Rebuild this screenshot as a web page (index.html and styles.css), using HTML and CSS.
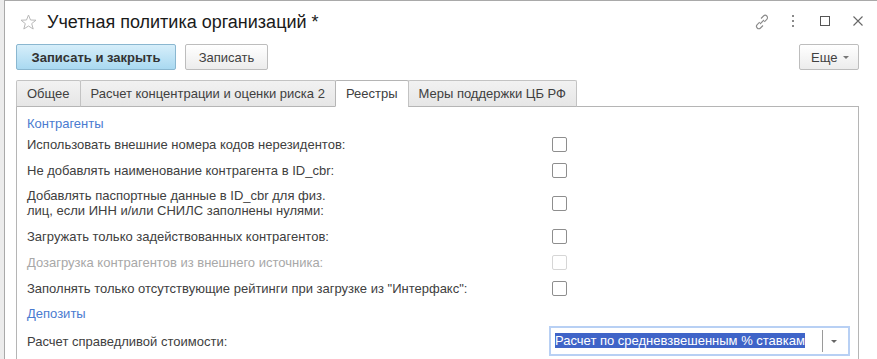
FILE: index.html
```html
<!DOCTYPE html>
<html lang="ru">
<head>
<meta charset="utf-8">
<title>Учетная политика организаций</title>
<link rel="stylesheet" href="styles.css">
</head>
<body>
<div class="window">
  <header class="titlebar">
    <svg class="star" width="17" height="16" viewBox="0 0 17 16"><path d="M8.5 1 L10.5 6 L16 6.2 L11.7 9.6 L13.2 15 L8.5 12 L3.8 15 L5.3 9.6 L1 6.2 L6.5 6 Z" fill="none" stroke="#b9b9b9" stroke-width="1"/></svg>
    <h1 class="title">Учетная политика организаций *</h1>
    <div class="win-actions">
      <svg class="ico ico-link" width="16" height="16" viewBox="0 0 16 16"><g fill="none" stroke="#8a8a8a" stroke-width="1.1"><path d="M7 4.5 L9.5 2 a2.3 2.3 0 0 1 3.3 3.3 L10.3 7.8"/><path d="M9 11.5 L6.5 14 a2.3 2.3 0 0 1 -3.3 -3.3 L5.7 8.2"/><path d="M6 10 L10 6"/></g></svg>
      <svg class="ico ico-dots" width="4" height="14" viewBox="0 0 4 14"><g fill="#8a8a8a"><rect x="1" y="1" width="2" height="2"/><rect x="1" y="6" width="2" height="2"/><rect x="1" y="11" width="2" height="2"/></g></svg>
      <svg class="ico ico-max" width="10" height="10" viewBox="0 0 10 10"><rect x="0.5" y="0.5" width="9" height="9" fill="none" stroke="#555" stroke-width="1"/></svg>
      <svg class="ico ico-close" width="10" height="10" viewBox="0 0 10 10"><path d="M0.5 0.5 L9.5 9.5 M9.5 0.5 L0.5 9.5" stroke="#666" stroke-width="1.1"/></svg>
    </div>
  </header>

  <div class="toolbar">
    <button class="btn btn-primary">Записать и закрыть</button>
    <button class="btn btn-plain">Записать</button>
    <div class="spacer"></div>
    <button class="btn btn-more">Еще <span class="caret"></span></button>
  </div>

  <nav class="tabs">
    <div class="tab">Общее</div>
    <div class="tab">Расчет концентрации и оценки риска 2</div>
    <div class="tab tab-active">Реестры</div>
    <div class="tab">Меры поддержки ЦБ РФ</div>
  </nav>

  <section class="panel">
    <div class="group-title">Контрагенты</div>
    <div class="row"><div class="label">Использовать внешние номера кодов нерезидентов:</div><span class="check"></span></div>
    <div class="row"><div class="label">Не добавлять наименование контрагента в ID_cbr:</div><span class="check"></span></div>
    <div class="row row-tall"><div class="label">Добавлять паспортные данные в ID_cbr для физ.<br>лиц, если ИНН и/или СНИЛС заполнены нулями:</div><span class="check"></span></div>
    <div class="row"><div class="label">Загружать только задействованных контрагентов:</div><span class="check"></span></div>
    <div class="row row-disabled"><div class="label">Дозагрузка контрагентов из внешнего источника:</div><span class="check check-disabled"></span></div>
    <div class="row"><div class="label">Заполнять только отсутствующие рейтинги при загрузке из "Интерфакс":</div><span class="check"></span></div>
    <div class="group-title group-title-2">Депозиты</div>
    <div class="row row-input"><div class="label">Расчет справедливой стоимости:</div>
      <div class="select"><span class="select-text"><span class="selected">Расчет по средневзвешенным % ставкам</span></span><span class="select-sep"></span><span class="select-arrow"></span></div>
    </div>
  </section>
</div>
</body>
</html>
```

FILE: styles.css
```css
html, body {
  margin: 0;
  padding: 0;
  height: 100%;
  overflow: hidden;
}
body {
  background: #ececec;
  font-family: Arial, "Liberation Sans", sans-serif;
  font-size: 13px;
  color: #404040;
}
.window {
  margin-left: 4px;
  border-left: 1px solid #a9a9a9;
  border-top: 1px solid #a9a9a9;
  background: #fff;
  min-height: 100%;
  padding: 0 18px 0 11px;
  box-sizing: border-box;
}
.titlebar {
  display: flex;
  align-items: flex-start;
  height: 43px;
  padding-top: 10px;
  box-sizing: border-box;
}
.star {
  margin: 3px 0 0 4px;
}
.title {
  margin: 0 0 0 10px;
  font-size: 18px;
  font-weight: normal;
  line-height: 22px;
  color: #1a1a1a;
}
.win-actions {
  margin-left: auto;
  display: flex;
  align-items: center;
  height: 20px;
  margin-right: -4px;
}
.ico-link { margin-right: 21px; margin-top: 1px; }
.ico-dots { margin-right: 25px; }
.ico-max { margin-right: 23px; }

.toolbar {
  display: flex;
  align-items: center;
  height: 26px;
}
.spacer { flex: 1; }
.btn {
  height: 26px;
  box-sizing: border-box;
  font-family: Arial, "Liberation Sans", sans-serif;
  font-size: 13px;
  border-radius: 2px;
  padding: 0 14px;
  color: #404040;
  cursor: default;
}
.btn-primary {
  font-weight: bold;
  color: #333;
  background: linear-gradient(#d6eefa, #a9d9f1);
  border: 1px solid #8ab7d0;
  padding: 0 14px;
  width: 160px;
}
.btn-plain {
  margin-left: 9px;
  width: 83px;
  padding: 0;
  background: linear-gradient(#ffffff, #ececec);
  border: 1px solid #bdbdbd;
}
.btn-more {
  width: 60px;
  padding: 0 0 0 11px;
  text-align: left;
  background: linear-gradient(#ffffff, #ececec);
  border: 1px solid #bdbdbd;
  display: flex;
  align-items: center;
}
.caret {
  display: inline-block;
  margin-left: 6px;
  width: 0;
  height: 0;
  border-left: 3px solid transparent;
  border-right: 3px solid transparent;
  border-top: 3px solid #777;
}

.tabs {
  display: flex;
  margin-top: 10px;
  height: 27px;
  position: relative;
  z-index: 1;
}
.tab {
  height: 27px;
  box-sizing: border-box;
  padding: 0 10px;
  line-height: 26px;
  border: 1px solid #c3c3c3;
  border-bottom: 1px solid #b5b5b5;
  margin-right: -1px;
  background: linear-gradient(#f2f2f2, #e6e6e6);
  border-radius: 2px 2px 0 0;
  color: #404040;
}
.tab-active {
  background: #fff;
  border-color: #b5b5b5;
  border-bottom-color: #fff;
}

.panel {
  border: 1px solid #b5b5b5;
  margin-top: -1px;
  padding: 10px 10px 40px 10px;
}
.group-title {
  color: #4a7bd0;
  line-height: 14px;
  height: 14px;
}
.group-title-2 {
  height: 25px;
  line-height: 25px;
}
.row {
  display: grid;
  grid-template-columns: 525px auto;
  align-items: center;
  height: 26px;
}
.row-tall {
  height: 40px;
}
.label {
  line-height: 15px;
}
.row-disabled .label {
  color: #a8a8a8;
}
.check {
  width: 15px;
  height: 15px;
  box-sizing: border-box;
  border: 1px solid #8e8e8e;
  border-radius: 2px;
  background: #fff;
}
.check-disabled {
  border-color: #d6d6d6;
}
.row-input {
  grid-template-columns: 522px auto;
  height: 30px;
}
.select {
  width: 301px;
  height: 30px;
  box-sizing: border-box;
  border: 2px solid #b8d0f4;
  display: flex;
  align-items: center;
  padding-left: 4px;
}
.select-text {
  flex: 1;
  font-size: 13px;
  line-height: 16px;
  white-space: nowrap;
  overflow: hidden;
}
.selected {
  background: #3f64c8;
  color: #fff;
}
.select-sep {
  width: 1px;
  height: 22px;
  background: #9a9a9a;
  margin-right: 8px;
}
.select-arrow {
  width: 0;
  height: 0;
  border-left: 3px solid transparent;
  border-right: 3px solid transparent;
  border-top: 3px solid #666;
  margin-right: 11px;
}
```
